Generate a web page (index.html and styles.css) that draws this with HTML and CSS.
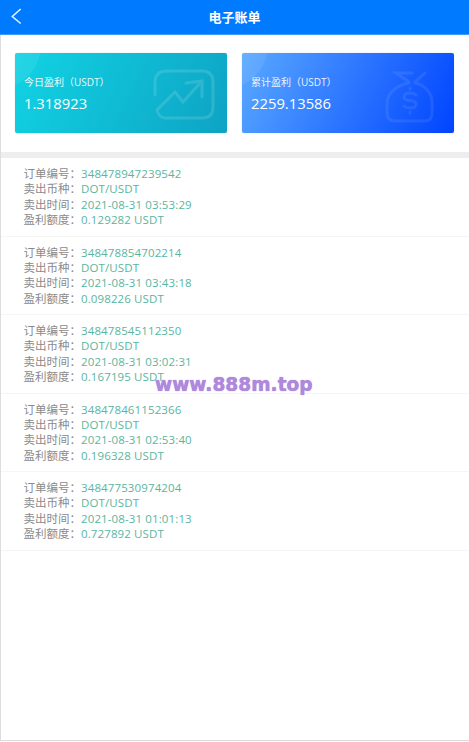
FILE: index.html
```html
<!DOCTYPE html>
<html lang="zh-CN">
<head>
    <meta charset="UTF-8">
    <meta name="viewport" content="width=device-width, initial-scale=1.0">
    <title>电子账单</title>
    <link rel="stylesheet" href="styles.css">
</head>
<body>
    <div class="page">
        <header class="header">
            <svg class="back" width="12" height="18" viewBox="0 0 12 18"><path d="M9.7 2 L1.3 9.5 L9.7 16.5" fill="none" stroke="#e6f2ff" stroke-width="1.6"/></svg>
            <h1>电子账单</h1>
        </header>
        <section class="cards">
            <div class="card card-green">
                <div class="card-label">今日盈利（USDT）</div>
                <div class="card-value">1.318923</div>
                <svg class="card-icon" width="80" height="70" viewBox="0 0 80 70"><g fill="none" stroke="#fff" stroke-width="3" stroke-linecap="round"><path d="M10 35 V22 Q10 11 22 11 H57 Q68 11 68 22 V47 Q68 58 57 58 H20 Q14 58 12 50 L30 32 L38 42 L57 21"/><path d="M41 23 L57 21 L57 37"/></g></svg>
            </div>
            <div class="card card-blue">
                <div class="card-label">累计盈利（USDT）</div>
                <div class="card-value">2259.13586</div>
                <svg class="card-icon card-icon-bag" width="70" height="70" viewBox="0 0 70 70"><g fill="none" stroke="#fff" stroke-width="3" stroke-linecap="round"><path d="M34 22 L21 13 H37"/><path d="M50 13 L40 22"/><path d="M34 23 C22 25 12 33 12 44 V53 Q12 61 20 61 H50 Q57 61 57 53 V42 C57 32 48 24 40 23"/><path d="M41 35 Q39 33 35 33 Q29 33 29 37 Q29 40 35 40.5 Q41 41 41 44 Q41 48 35 48 Q31 48 29 46"/><path d="M35 28 V29 M35 52 V53"/></g></svg>
            </div>
        </section>
        <ul class="orders">
            <li class="order">
                <div class="line"><span class="key">订单编号：</span><span class="val">348478947239542</span></div>
                <div class="line"><span class="key">卖出币种：</span><span class="val">DOT/USDT</span></div>
                <div class="line"><span class="key">卖出时间：</span><span class="val">2021-08-31 03:53:29</span></div>
                <div class="line"><span class="key">盈利额度：</span><span class="val">0.129282 USDT</span></div>
            </li>
            <li class="order">
                <div class="line"><span class="key">订单编号：</span><span class="val">348478854702214</span></div>
                <div class="line"><span class="key">卖出币种：</span><span class="val">DOT/USDT</span></div>
                <div class="line"><span class="key">卖出时间：</span><span class="val">2021-08-31 03:43:18</span></div>
                <div class="line"><span class="key">盈利额度：</span><span class="val">0.098226 USDT</span></div>
            </li>
            <li class="order">
                <div class="line"><span class="key">订单编号：</span><span class="val">348478545112350</span></div>
                <div class="line"><span class="key">卖出币种：</span><span class="val">DOT/USDT</span></div>
                <div class="line"><span class="key">卖出时间：</span><span class="val">2021-08-31 03:02:31</span></div>
                <div class="line"><span class="key">盈利额度：</span><span class="val">0.167195 USDT</span></div>
            </li>
            <li class="order">
                <div class="line"><span class="key">订单编号：</span><span class="val">348478461152366</span></div>
                <div class="line"><span class="key">卖出币种：</span><span class="val">DOT/USDT</span></div>
                <div class="line"><span class="key">卖出时间：</span><span class="val">2021-08-31 02:53:40</span></div>
                <div class="line"><span class="key">盈利额度：</span><span class="val">0.196328 USDT</span></div>
            </li>
            <li class="order">
                <div class="line"><span class="key">订单编号：</span><span class="val">348477530974204</span></div>
                <div class="line"><span class="key">卖出币种：</span><span class="val">DOT/USDT</span></div>
                <div class="line"><span class="key">卖出时间：</span><span class="val">2021-08-31 01:01:13</span></div>
                <div class="line"><span class="key">盈利额度：</span><span class="val">0.727892 USDT</span></div>
            </li>
        </ul>
    </div>
    <div class="watermark">www.888m.top</div>
</body>
</html>
```

FILE: styles.css
```css
html, body {
    margin: 0;
    padding: 0;
    height: 100%;
    background-color: #fff;
    overflow: hidden;
}
body {
    position: relative;
    font-family: "Open Sans", "Noto Sans CJK SC", sans-serif;
}
.page {
    height: 741px;
    box-sizing: border-box;
    border-left: 1px solid #ddd;
    border-bottom: 1px solid #ddd;
}
.header {
    position: relative;
    height: 35px;
    margin-left: -1px;
    background-color: #007aff;
    border-bottom: 1px solid #3f9bff;
    box-sizing: border-box;
}
.header h1 {
    margin: 0;
    font-size: 13px;
    line-height: 34px;
    font-weight: 700;
    color: #fff;
    text-align: center;
}
.back {
    position: absolute;
    left: 11px;
    top: 7px;
}
.cards {
    display: grid;
    grid-template-columns: 212px 212px;
    grid-gap: 15px;
    padding: 18px 0 19px 14px;
    border-bottom: 6px solid #eee;
}
.card {
    position: relative;
    height: 80px;
    box-sizing: border-box;
    padding: 22px 9px 0;
    color: #fff;
    border-radius: 2px;
    overflow: hidden;
    box-shadow: 0 0 1px rgba(0, 90, 160, 0.4);
}
.card::before {
    content: "";
    position: absolute;
    left: -62px;
    top: -52px;
    width: 88px;
    height: 88px;
    border-radius: 50%;
    background-color: rgba(255, 255, 255, 0.08);
}
.card-green {
    background: linear-gradient(115deg, #11d3e4, #0ea3c4);
}
.card-blue {
    background: linear-gradient(115deg, #5aa9ff, #0044ff);
}
.card-label {
    font-size: 10px;
    line-height: 14px;
    opacity: 0.9;
}
.card-value {
    margin-top: 4px;
    font-size: 14.8px;
    line-height: 20px;
}
.card-icon {
    position: absolute;
    right: 2px;
    top: 7px;
    opacity: 0.13;
}
.card-icon-bag {
    right: 9px;
    opacity: 0.08;
}
.orders {
    list-style: none;
    margin: 0;
    padding: 0;
}
.order {
    height: 78.5px;
    box-sizing: border-box;
    padding: 8px 0 0 22.5px;
    border-bottom: 1px solid #f5f5f5;
}
.line {
    font-size: 11.5px;
    line-height: 15.4px;
    white-space: nowrap;
}
.key {
    color: #8a8a8a;
}
.val {
    color: #5ab5a0;
    letter-spacing: 0.12px;
}
.watermark {
    position: absolute;
    left: 155px;
    top: 372px;
    font-family: "DejaVu Sans", sans-serif;
    font-size: 18.6px;
    line-height: 26px;
    font-weight: 700;
    color: #b088dc;
    text-shadow: 0 0 1px #9a70d0;
}
```
